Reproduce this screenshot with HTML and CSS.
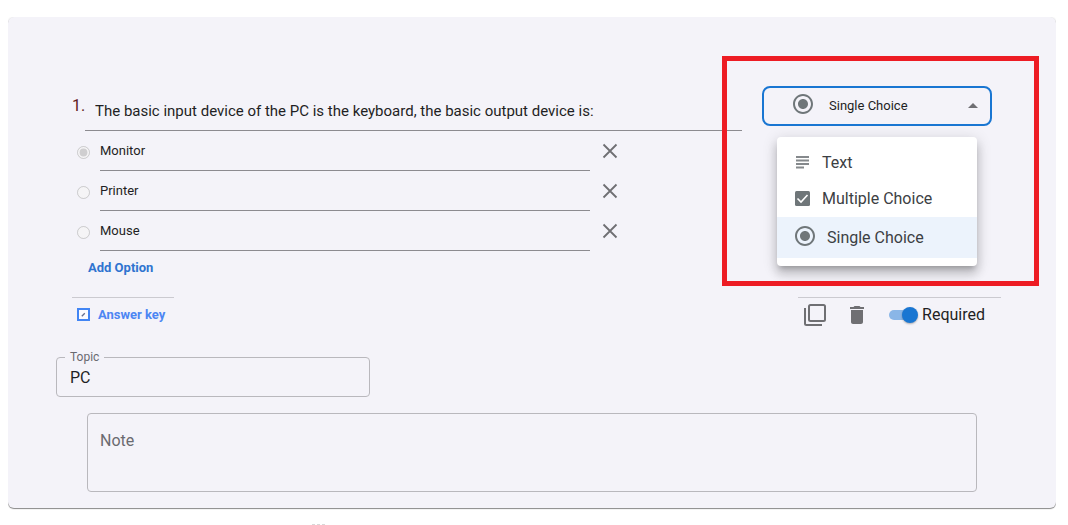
FILE: index.html
```html
<!DOCTYPE html>
<html lang="en">
<head>
<meta charset="utf-8">
<meta name="viewport" content="width=device-width, initial-scale=1">
<title>Question editor</title>
<link rel="stylesheet" href="styles.css">
</head>
<body>
<main class="card">
  <section class="question">
    <div class="question-body">
      <div class="question-title">
        <label class="question-number" for="question">1.</label>
        <input class="question-input" id="question" type="text" value="The basic input device of the PC is the keyboard, the basic output device is:">
      </div>
      <div class="option">
        <input class="option-radio" type="radio" name="answer" aria-label="Monitor" checked disabled>
        <input class="option-input" type="text" aria-label="Option 1" value="Monitor">
        <button class="icon-button" type="button" aria-label="Remove Monitor"><svg width="24" height="24" viewBox="0 0 24 24"><path d="M5.500 5.500l13 13M18.500 5.500l-13 13" stroke="currentColor" stroke-width="1.800" fill="none"/></svg></button>
      </div>
      <div class="option">
        <input class="option-radio" type="radio" name="answer" aria-label="Printer" disabled>
        <input class="option-input" type="text" aria-label="Option 2" value="Printer">
        <button class="icon-button" type="button" aria-label="Remove Printer"><svg width="24" height="24" viewBox="0 0 24 24"><path d="M5.500 5.500l13 13M18.500 5.500l-13 13" stroke="currentColor" stroke-width="1.800" fill="none"/></svg></button>
      </div>
      <div class="option">
        <input class="option-radio" type="radio" name="answer" aria-label="Mouse" disabled>
        <input class="option-input" type="text" aria-label="Option 3" value="Mouse">
        <button class="icon-button" type="button" aria-label="Remove Mouse"><svg width="24" height="24" viewBox="0 0 24 24"><path d="M5.500 5.500l13 13M18.500 5.500l-13 13" stroke="currentColor" stroke-width="1.800" fill="none"/></svg></button>
      </div>
      <button class="add-option" type="button">Add Option</button>
    </div>

    <div class="type-picker">
      <button class="type-trigger" type="button" aria-haspopup="listbox" aria-expanded="true">
        <svg class="trigger-icon" width="24" height="24" viewBox="0 0 24 24" fill="#6f7679"><path d="M12 7c-2.760 0-5 2.240-5 5s2.240 5 5 5 5-2.240 5-5-2.240-5-5-5zm0-5C6.480 2 2 6.480 2 12s4.480 10 10 10 10-4.480 10-10S17.520 2 12 2zm0 18c-4.420 0-8-3.580-8-8s3.580-8 8-8 8 3.580 8 8-3.580 8-8 8z"/></svg>
        <span class="trigger-label">Single Choice</span>
        <svg width="24" height="24" viewBox="0 0 24 24" fill="#6f6f73"><path d="M7 14l5-5 5 5z"/></svg>
      </button>
      <ul class="type-menu" role="listbox" aria-label="Question type">
        <li class="type-item" role="option" aria-selected="false">
          <svg width="18" height="18" viewBox="0 0 18 18" fill="#85898c"><path d="M2 3h13v2H2zM2 6.500h13v2H2zM2 10h13v2H2zM2 13.500h8v2H2z"/></svg>
          Text
        </li>
        <li class="type-item" role="option" aria-selected="false">
          <svg width="18" height="18" viewBox="0 0 18 18"><rect x="1" y="2" width="15" height="15" rx="1.500" fill="#6f7679"/><path d="M3.500 9.500l3.500 3.500 6.500-7" stroke="#fff" stroke-width="1.600" fill="none"/></svg>
          Multiple Choice
        </li>
        <li class="type-item type-item-selected" role="option" aria-selected="true">
          <svg width="22" height="22" viewBox="1 1 22 22" fill="#6f7679"><path d="M12 7c-2.760 0-5 2.240-5 5s2.240 5 5 5 5-2.240 5-5-2.240-5-5-5zm0-5C6.480 2 2 6.480 2 12s4.480 10 10 10 10-4.480 10-10S17.520 2 12 2zm0 18c-4.420 0-8-3.580-8-8s3.580-8 8-8 8 3.580 8 8-3.580 8-8 8z"/></svg>
          Single Choice
        </li>
      </ul>
      <div class="highlight"></div>
    </div>
  </section>

  <div class="toolbar">
    <button class="answer-key" type="button">
      <svg width="13" height="13" viewBox="0 0 13 13"><path d="M1 1h11v11H1z" fill="#fcfcff" stroke="#4285f4" stroke-width="2"/><path d="M4.800 8.200l3-3" stroke="#66708f" stroke-width="1.300"/></svg>
      Answer key
    </button>
    <div class="actions">
      <button class="icon-button" type="button" aria-label="Duplicate"><svg width="24" height="24" viewBox="0 0 24 24" fill="none" stroke="currentColor" stroke-width="2"><rect x="6" y="2" width="16" height="16" rx="1.500"/><path d="M2 5v15.500A1.500 1.500 0 0 0 3.500 22H19"/></svg></button>
      <button class="icon-button" type="button" aria-label="Delete"><svg width="24" height="24" viewBox="0 0 24 24" fill="currentColor"><path d="M6 19c0 1.100.900 2 2 2h8c1.100 0 2-.900 2-2V7H6v12zM19 4h-3.500l-1-1h-5l-1 1H5v2h14V4z"/></svg></button>
      <label class="required"><input class="switch" type="checkbox" role="switch" checked>Required</label>
    </div>
  </div>

  <div class="topic">
    <label class="topic-label" for="topic">Topic</label>
    <input class="topic-input" id="topic" type="text" value="PC">
  </div>
  <textarea class="note" placeholder="Note" aria-label="Note"></textarea>
</main>
<div class="grip"><i></i><i></i><i></i></div>
</body>
</html>
```
FILE: styles.css
```css
* {
  box-sizing: border-box;
}

body {
  margin: 17px 12px 0 8px;
  background: #fff;
  font-family: Roboto, "Liberation Sans", sans-serif;
  color: #1f1f24;
}

button,
input,
textarea {
  margin: 0;
  padding: 0;
  border: 0;
  background: transparent;
  color: inherit;
  font: inherit;
}

svg {
  display: block;
  flex: none;
}

.card {
  padding: 69px 48px 16px;
  border-radius: 6px;
  background: #f4f3f9;
  box-shadow: 0 1px 1px rgba(0, 0, 0, 0.45), 0 0 2px rgba(0, 0, 0, 0.12);
}

.question {
  display: grid;
  grid-template-columns: 1fr 230px;
  align-items: start;
  gap: 20px;
  padding: 0 16px;
}

.question-title {
  display: flex;
  height: 45px;
}

.question-number {
  width: 13px;
  padding-top: 10px;
  color: #5f2020;
  font-size: 16px;
  line-height: 20px;
}

.question-input {
  flex: 1;
  min-width: 0;
  padding: 5px 0 0 10px;
  border-bottom: 1px solid #8c8b90;
  font-size: 15px;
}

.option {
  display: flex;
  align-items: center;
  height: 40px;
  padding-left: 5px;
}

.option-radio {
  width: 13px;
  height: 13px;
  margin: 3px 10px 0 0;
}

.option-input {
  width: 490px;
  height: 40px;
  border-bottom: 1px solid #8c8b90;
  font-size: 13px;
}

.icon-button {
  color: #6f6f73;
}

.option .icon-button {
  margin-left: 8px;
}

.add-option {
  display: block;
  height: 33px;
  padding-left: 16px;
  color: #2f74d0;
  font-size: 13px;
  font-weight: 700;
}

.type-picker {
  position: relative;
}

.type-trigger {
  display: flex;
  align-items: center;
  width: 100%;
  height: 40px;
  padding: 0 5px 0 27px;
  border: 2px solid #1976d2;
  border-radius: 8px;
  font-size: 13px;
}

.trigger-icon {
  margin-bottom: 4px;
}

.trigger-label {
  flex: 1;
  padding: 0 0 2px 14px;
  text-align: left;
}

.type-menu {
  position: absolute;
  top: 51px;
  left: 15px;
  width: 200px;
  margin: 0;
  padding: 8px 0;
  border-radius: 4px;
  background: #fff;
  box-shadow: 0 5px 5px -3px rgba(0, 0, 0, 0.2), 0 8px 10px 1px rgba(0, 0, 0, 0.14), 0 3px 14px 2px rgba(0, 0, 0, 0.12);
  color: #3c4043;
  list-style: none;
}

.type-item {
  display: flex;
  align-items: center;
  gap: 10px;
  height: 36px;
  padding: 0 0 2px 17px;
  font-size: 16px;
}

.type-item-selected {
  gap: 11px;
  height: 41px;
  padding-bottom: 0;
  background: #ecf3fc;
}

.type-item-selected svg {
  margin-bottom: 4px;
}

.highlight {
  position: absolute;
  top: -30px;
  left: -40px;
  width: 317px;
  height: 230px;
  border: 5px solid #ed1c24;
  pointer-events: none;
}

.toolbar {
  display: flex;
  justify-content: space-between;
  margin: 13px 7px 0 16px;
}

.answer-key {
  display: flex;
  align-items: center;
  gap: 8px;
  min-width: 102px;
  height: 34px;
  padding: 0 5px;
  border-top: 1px solid #cbcad0;
  color: #4d86f3;
  font-size: 13px;
  font-weight: 700;
}

.actions {
  display: flex;
  align-items: center;
  height: 34px;
  padding: 0 16px 0 5px;
  border-top: 1px solid #cbcad0;
}

.actions .icon-button {
  margin-right: 18px;
}

.required {
  display: flex;
  align-items: center;
  gap: 4px;
  font-size: 16px;
}

.switch {
  position: relative;
  width: 29px;
  height: 16px;
  margin-left: 2px;
  appearance: none;
}

.switch::before {
  content: "";
  display: block;
  height: 10px;
  margin: 3px 3px 3px 0;
  border-radius: 5px;
  background: #8ab6e7;
}

.switch::after {
  content: "";
  position: absolute;
  top: 0;
  right: 0;
  width: 16px;
  height: 16px;
  border-radius: 50%;
  background: #1976d2;
  box-shadow: 0 1px 2px rgba(0, 0, 0, 0.3);
}

.topic {
  position: relative;
  width: 33%;
  margin-top: 26px;
}

.topic-label {
  position: absolute;
  top: -8px;
  left: 9px;
  padding: 0 5px;
  background: #f4f3f9;
  color: #6a6a70;
  font-size: 12px;
  line-height: 16px;
}

.topic-input {
  display: block;
  width: 100%;
  height: 40px;
  padding: 0 13px;
  border: 1px solid #b9b8bd;
  border-radius: 4px;
  font-size: 16px;
}

.note {
  display: block;
  width: calc(100% - 62px);
  height: 79px;
  margin: 16px 31px 0;
  padding: 17px 12px;
  border: 1px solid #b9b8bd;
  border-radius: 4px;
  font-size: 16px;
  line-height: 20px;
  resize: none;
}

.note::placeholder {
  color: #6a6a70;
}

.grip {
  display: flex;
  gap: 2px;
  padding: 16px 0 0 304px;
}

.grip i {
  width: 3px;
  height: 1px;
  background: #d8d8d8;
}
```
